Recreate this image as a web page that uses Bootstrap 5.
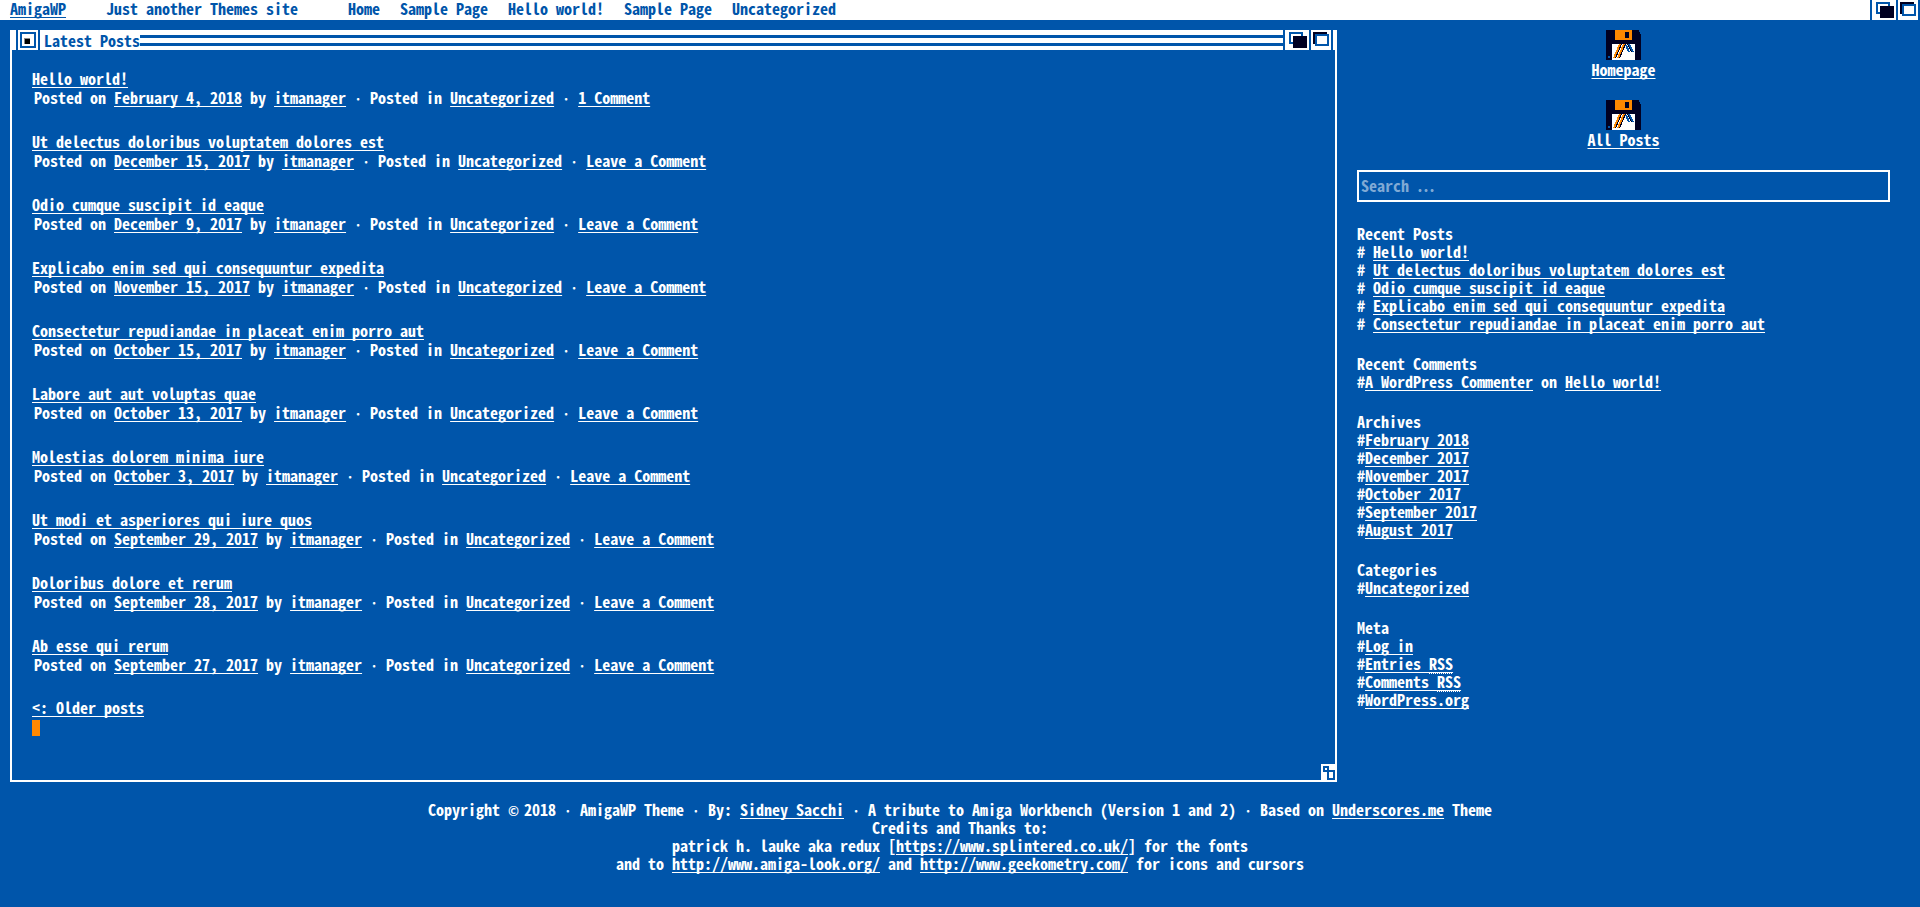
<!DOCTYPE html>
<html lang="en">
<head>
<meta charset="utf-8">
<meta name="viewport" content="width=device-width, initial-scale=1">
<title>AmigaWP</title>
<link href="https://cdn.jsdelivr.net/npm/bootstrap@5.3.0/dist/css/bootstrap.min.css" rel="stylesheet">
<style>
  :root { --wb-blue: #0055aa; --wb-dark: #000022; --wb-orange: #ff8800; }
  body {
    background: var(--wb-blue); color: #fff;
    font-family: "Noto Sans Mono CJK JP", "Noto Sans Mono CJK SC", "Liberation Mono", monospace;
    font-size: 16px; line-height: 18px; font-weight: 700;
  }
  a { color: inherit; text-decoration: underline; text-decoration-thickness: 1px; text-underline-offset: 2px; text-decoration-skip-ink: none; }
  a:hover { color: var(--wb-orange); }
  h1, h2, p, ul { font-size: 16px; line-height: 18px; font-weight: 700; margin: 0; }
  svg { display: block; flex: none; }
  button { border: 0; padding: 0; background: none; }
  .wb-dot { display: inline-block; width: 8px; font-size: 13px; line-height: 13px; text-align: center; }
  .wb-bar { min-height: 20px; background: #fff; color: var(--wb-blue); padding-left: 10px; line-height: 16px; }
  .wb-bar ul, .wb-bar p { line-height: 16px; }
  .wb-bar ul { column-gap: 20px; }
  .wb-bar .wb-brand { margin-right: 40px; }
  .wb-bar .wb-tagline { margin-right: 50px; }
  .wb-layout { display: grid; grid-template-columns: minmax(0, 1fr) 533px; gap: 20px; padding: 10px 30px 0 10px; }
  .wb-window { border: 2px solid #fff; border-top: 0; position: relative; min-height: 752px; }
  .wb-title { height: 20px; background: #fff; color: var(--wb-blue); margin: 0 -2px; padding-right: 4px; }
  .wb-title h1 { line-height: 20px; padding-left: 4px; }
  .wb-stripes { height: 11px; border: solid var(--wb-blue); border-width: 3px 0; margin-top: 1px; }
  .wb-posts { padding: 18px 20px 20px; }
  .wb-post { margin-bottom: 25px; }
  .wb-post h2 { line-height: 20px; }
  .wb-post p { padding-left: 2px; }
  .wb-cursor { width: 8px; height: 16px; background: var(--wb-orange); margin-top: 4px; }
  .wb-resize { position: absolute; right: -2px; bottom: -2px; }
  .wb-shortcut { margin-bottom: 22px; }
  .wb-search { display: block; width: 100%; height: 32px; border: 2px solid #fff; background: transparent; color: #fff; padding: 0 2px 2px; border-radius: 0; font-weight: 700; outline: 0; }
  .wb-search::placeholder { color: #80aad5; opacity: 1; }
  .wb-widget { margin-top: 22px; }
  .wb-widget abbr { text-decoration: underline dotted 1px; text-underline-offset: 3px; cursor: inherit; }
  footer { padding: 18px 10px; }
  @media (max-width: 1199px) { .wb-layout { grid-template-columns: minmax(0, 1fr); padding-right: 10px; } .wb-bar { flex-wrap: wrap; } }
</style>
</head>
<body>
<svg width="0" height="0" class="position-absolute" aria-hidden="true">
  <symbol id="gadgets" viewBox="0 0 50 20" shape-rendering="crispEdges">
    <path fill="#fff" d="M0 0h50v20H0z"/>
    <path fill="#05a" d="M0 0h2v20H0zM26 0h2v20h-2zM48 0h2v20h-2z"/>
    <path fill="none" stroke="#05a" stroke-width="2" d="M7 3h12v10H7z"/>
    <path fill="#002" d="M10 6h14v12H10zM30 2h14v12H30z"/>
    <path fill="#fff" stroke="#05a" stroke-width="2" d="M33 5h12v10H33z"/>
  </symbol>
  <symbol id="floppy" viewBox="0 0 35 30" shape-rendering="crispEdges">
    <path fill="#002" d="M0 0h33v2h1v2h1v26H0z"/>
    <path fill="#f80" d="M9 0h17v10H9z"/>
    <path fill="#002" d="M19 2h4v6h-4z"/>
    <path fill="#fff" d="M6 14h23v16H6z"/>
    <path fill="#05a" d="M2 26h2v2H2z"/>
    <g fill="none">
      <path stroke="#f80" stroke-width="2" d="M14 14L8 28M18 14L12 28"/>
      <path stroke="#002" d="M15.500 14l-6 14M19.500 14l-6 14M21.500 14l4 8"/>
      <path stroke="#05a" stroke-width="2" d="M20 15l3 7M23 14l4 8"/>
    </g>
  </symbol>
</svg>

<header class="wb-bar d-flex align-items-start">
  <a class="wb-brand" href="#">AmigaWP</a>
  <p class="wb-tagline">Just another Themes site</p>
  <nav class="me-auto" aria-label="Primary">
    <ul class="list-unstyled d-flex flex-wrap">
      <li><a class="text-decoration-none" href="#">Home</a></li>
      <li><a class="text-decoration-none" href="#">Sample Page</a></li>
      <li><a class="text-decoration-none" href="#">Hello world!</a></li>
      <li><a class="text-decoration-none" href="#">Sample Page</a></li>
      <li><a class="text-decoration-none" href="#">Uncategorized</a></li>
    </ul>
  </nav>
  <svg width="50" height="20" aria-hidden="true"><use href="#gadgets"/></svg>
</header>

<div class="wb-layout">
  <main class="wb-window">
    <div class="wb-title d-flex align-items-center">
      <button type="button" aria-label="Close window">
        <svg width="30" height="20" viewBox="0 0 30 20" shape-rendering="crispEdges"><path fill="#05a" d="M6 0h2v20H6zM28 0h2v20h-2z"/><path fill="none" stroke="#05a" stroke-width="2" d="M11 3h14v14H11z"/><path fill="#888" d="M14 8h6v6h-6z"/><path fill="#000" d="M15 9h5v5h-5z"/></svg>
      </button>
      <h1>Latest Posts</h1>
      <div class="wb-stripes flex-grow-1"></div>
      <svg width="50" height="20" aria-hidden="true"><use href="#gadgets"/></svg>
    </div>
    <div class="wb-posts">
      <article class="wb-post"><h2><a href="#">Hello world!</a></h2>
        <p>Posted on <a href="#">February 4, 2018</a> by <a href="#">itmanager</a> <span class="wb-dot">·</span> Posted in <a href="#">Uncategorized</a> <span class="wb-dot">·</span> <a href="#">1 Comment</a></p></article>
      <article class="wb-post"><h2><a href="#">Ut delectus doloribus voluptatem dolores est</a></h2>
        <p>Posted on <a href="#">December 15, 2017</a> by <a href="#">itmanager</a> <span class="wb-dot">·</span> Posted in <a href="#">Uncategorized</a> <span class="wb-dot">·</span> <a href="#">Leave a Comment</a></p></article>
      <article class="wb-post"><h2><a href="#">Odio cumque suscipit id eaque</a></h2>
        <p>Posted on <a href="#">December 9, 2017</a> by <a href="#">itmanager</a> <span class="wb-dot">·</span> Posted in <a href="#">Uncategorized</a> <span class="wb-dot">·</span> <a href="#">Leave a Comment</a></p></article>
      <article class="wb-post"><h2><a href="#">Explicabo enim sed qui consequuntur expedita</a></h2>
        <p>Posted on <a href="#">November 15, 2017</a> by <a href="#">itmanager</a> <span class="wb-dot">·</span> Posted in <a href="#">Uncategorized</a> <span class="wb-dot">·</span> <a href="#">Leave a Comment</a></p></article>
      <article class="wb-post"><h2><a href="#">Consectetur repudiandae in placeat enim porro aut</a></h2>
        <p>Posted on <a href="#">October 15, 2017</a> by <a href="#">itmanager</a> <span class="wb-dot">·</span> Posted in <a href="#">Uncategorized</a> <span class="wb-dot">·</span> <a href="#">Leave a Comment</a></p></article>
      <article class="wb-post"><h2><a href="#">Labore aut aut voluptas quae</a></h2>
        <p>Posted on <a href="#">October 13, 2017</a> by <a href="#">itmanager</a> <span class="wb-dot">·</span> Posted in <a href="#">Uncategorized</a> <span class="wb-dot">·</span> <a href="#">Leave a Comment</a></p></article>
      <article class="wb-post"><h2><a href="#">Molestias dolorem minima iure</a></h2>
        <p>Posted on <a href="#">October 3, 2017</a> by <a href="#">itmanager</a> <span class="wb-dot">·</span> Posted in <a href="#">Uncategorized</a> <span class="wb-dot">·</span> <a href="#">Leave a Comment</a></p></article>
      <article class="wb-post"><h2><a href="#">Ut modi et asperiores qui iure quos</a></h2>
        <p>Posted on <a href="#">September 29, 2017</a> by <a href="#">itmanager</a> <span class="wb-dot">·</span> Posted in <a href="#">Uncategorized</a> <span class="wb-dot">·</span> <a href="#">Leave a Comment</a></p></article>
      <article class="wb-post"><h2><a href="#">Doloribus dolore et rerum</a></h2>
        <p>Posted on <a href="#">September 28, 2017</a> by <a href="#">itmanager</a> <span class="wb-dot">·</span> Posted in <a href="#">Uncategorized</a> <span class="wb-dot">·</span> <a href="#">Leave a Comment</a></p></article>
      <article class="wb-post"><h2><a href="#">Ab esse qui rerum</a></h2>
        <p>Posted on <a href="#">September 27, 2017</a> by <a href="#">itmanager</a> <span class="wb-dot">·</span> Posted in <a href="#">Uncategorized</a> <span class="wb-dot">·</span> <a href="#">Leave a Comment</a></p></article>
      <nav aria-label="Posts"><a href="#">&lt;: Older posts</a></nav>
      <div class="wb-cursor"></div>
    </div>
    <svg class="wb-resize" width="16" height="18" viewBox="0 0 16 18" shape-rendering="crispEdges" aria-hidden="true"><path fill="#fff" d="M0 0h16v18H0z"/><path fill="none" stroke="#05a" stroke-width="2" d="M3 3h4v4H3zM7 7h6v8H7z"/></svg>
  </main>

  <aside>
    <div class="wb-shortcut d-flex flex-column align-items-center"><svg width="35" height="30" aria-hidden="true"><use href="#floppy"/></svg><a href="#">Homepage</a></div>
    <div class="wb-shortcut d-flex flex-column align-items-center"><svg width="35" height="30" aria-hidden="true"><use href="#floppy"/></svg><a href="#">All Posts</a></div>
    <form role="search"><input class="wb-search" type="search" aria-label="Search for" placeholder="Search …"></form>
    <section class="wb-widget"><h2>Recent Posts</h2>
      <ul class="list-unstyled">
        <li># <a href="#">Hello world!</a></li>
        <li># <a href="#">Ut delectus doloribus voluptatem dolores est</a></li>
        <li># <a href="#">Odio cumque suscipit id eaque</a></li>
        <li># <a href="#">Explicabo enim sed qui consequuntur expedita</a></li>
        <li># <a href="#">Consectetur repudiandae in placeat enim porro aut</a></li>
      </ul></section>
    <section class="wb-widget"><h2>Recent Comments</h2>
      <ul class="list-unstyled"><li>#<a href="#">A WordPress Commenter</a> on <a href="#">Hello world!</a></li></ul></section>
    <section class="wb-widget"><h2>Archives</h2>
      <ul class="list-unstyled">
        <li>#<a href="#">February 2018</a></li>
        <li>#<a href="#">December 2017</a></li>
        <li>#<a href="#">November 2017</a></li>
        <li>#<a href="#">October 2017</a></li>
        <li>#<a href="#">September 2017</a></li>
        <li>#<a href="#">August 2017</a></li>
      </ul></section>
    <section class="wb-widget"><h2>Categories</h2>
      <ul class="list-unstyled"><li>#<a href="#">Uncategorized</a></li></ul></section>
    <section class="wb-widget"><h2>Meta</h2>
      <ul class="list-unstyled">
        <li>#<a href="#">Log in</a></li>
        <li>#<a href="#">Entries <abbr title="Really Simple Syndication">RSS</abbr></a></li>
        <li>#<a href="#">Comments <abbr title="Really Simple Syndication">RSS</abbr></a></li>
        <li>#<a href="#">WordPress.org</a></li>
      </ul></section>
  </aside>
</div>

<footer class="text-center">
  <p>Copyright <span class="wb-dot">©</span> 2018 <span class="wb-dot">·</span> AmigaWP Theme <span class="wb-dot">·</span> By: <a href="#">Sidney Sacchi</a> <span class="wb-dot">·</span> A tribute to Amiga Workbench (Version 1 and 2) <span class="wb-dot">·</span> Based on <a href="#">Underscores.me</a> Theme</p>
  <p>Credits and Thanks to:</p>
  <p>patrick h. lauke aka redux [<a href="#">https://www.splintered.co.uk/</a>] for the fonts</p>
  <p>and to <a href="#">http://www.amiga-look.org/</a> and <a href="#">http://www.geekometry.com/</a> for icons and cursors</p>
</footer>
<script src="https://cdn.jsdelivr.net/npm/bootstrap@5.3.0/dist/js/bootstrap.bundle.min.js"></script>
</body>
</html>
